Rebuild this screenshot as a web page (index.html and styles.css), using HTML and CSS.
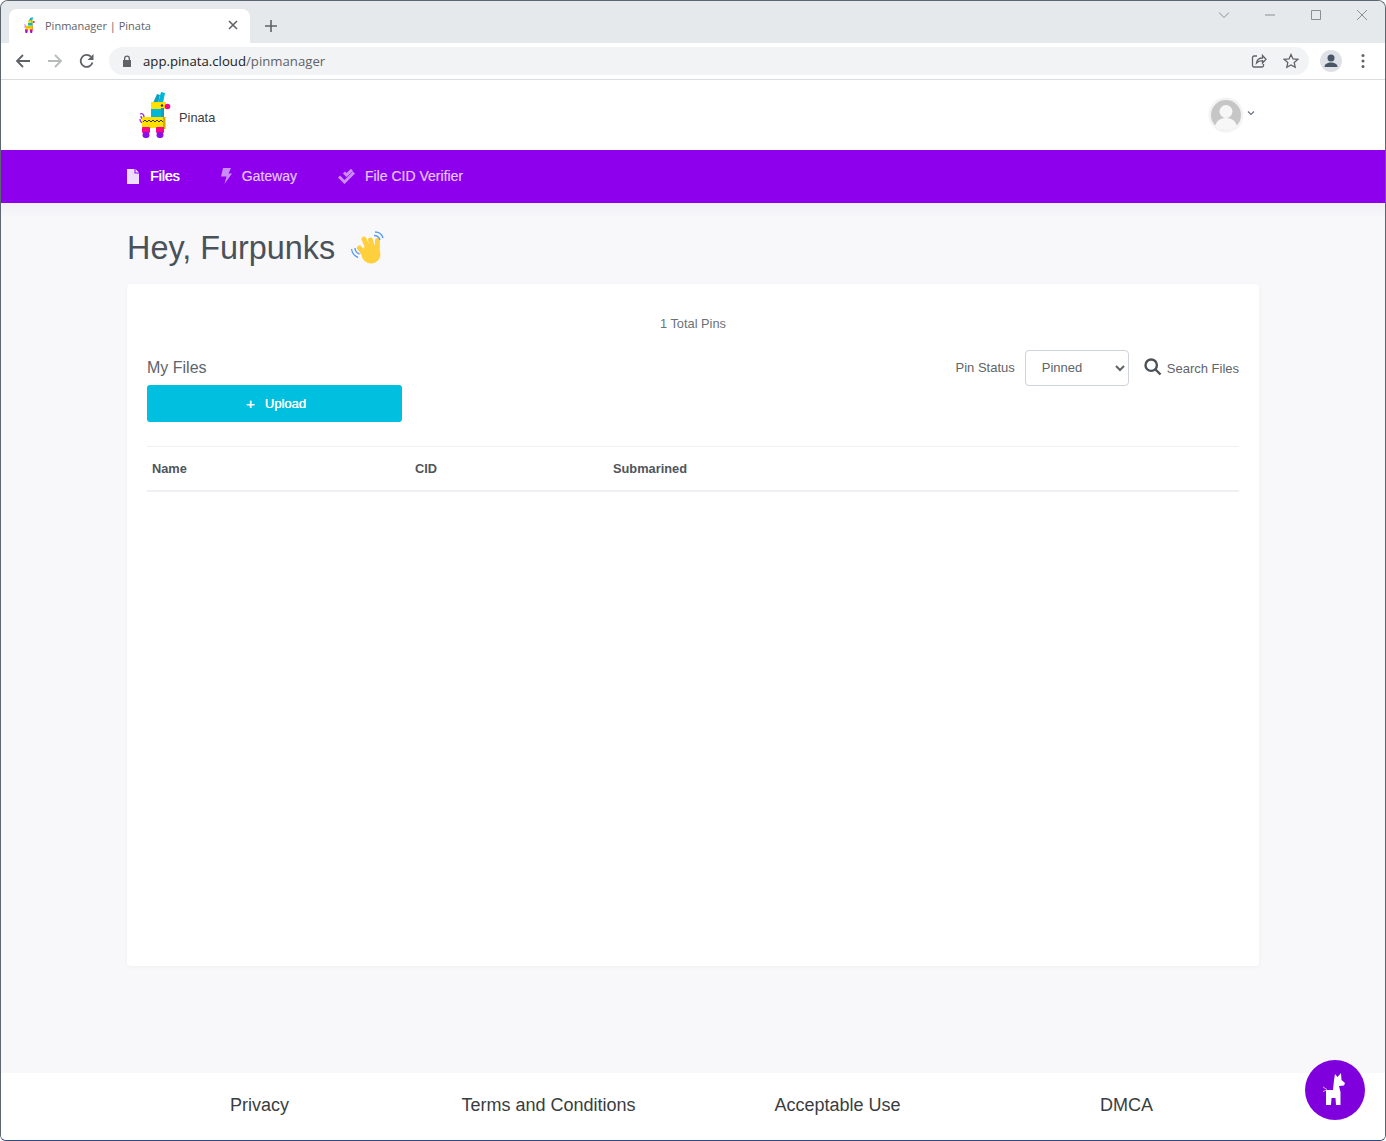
FILE: index.html
```html
<!DOCTYPE html>
<html lang="en">
<head>
  <meta charset="UTF-8" />
  <title>Pinmanager | Pinata</title>
  <link rel="stylesheet" href="styles.css">
</head>
<body>
  <svg class="defs" width="0" height="0">
    <symbol id="pinata" viewBox="0 0 32 46">
      <path d="M5 31c-3 0-4-2-4-4M5 27c-2 0-3-1-3-3M1 22c2-1 4 0 4 3v5" fill="none" stroke="#a01be8" stroke-width="1.300"/>
      <path d="M14 11l4-9 3 1-2 8z" fill="#0e9fbf"/>
      <path d="M19 11l3-11 4 1-2 10z" fill="#00b7d8"/>
      <rect x="12" y="10" width="15" height="7" fill="#ffe100"/>
      <circle cx="28.500" cy="14.500" r="2.800" fill="#f5078f"/>
      <circle cx="23" cy="13.500" r="1.200" fill="#333"/>
      <rect x="12" y="17" width="11" height="8" fill="#00b7d8"/>
      <rect x="22" y="16" width="3" height="10" fill="#0e9fbf"/>
      <rect x="3" y="25" width="22" height="11" fill="#ffe100"/>
      <rect x="24" y="25" width="2.500" height="12" fill="#cfa800"/>
      <path d="M4 30l2-2 2 2 2-2 2 2 2-2 2 2 2-2 2 2 2-2 2 2" fill="none" stroke="#222" stroke-width=".9"/>
      <rect x="3" y="35" width="8" height="6" rx="1" fill="#f5078f"/>
      <rect x="17" y="35" width="8" height="6" rx="1" fill="#f5078f"/>
      <rect x="3.500" y="40" width="7" height="6" rx="3" fill="#8a10e8"/>
      <rect x="17.500" y="40" width="7" height="6" rx="3" fill="#8a10e8"/>
    </symbol>
  </svg>

  <div class="window">
    <div class="tabstrip">
      <div class="tab">
        <svg class="tab-logo"><use href="#pinata"/></svg>
        <span class="tab-title">Pinmanager | Pinata</span>
        <svg class="tab-close" viewBox="0 0 10 10"><path d="M1 1l8 8M9 1l-8 8"/></svg>
      </div>
      <svg class="new-tab" viewBox="0 0 12 12"><path d="M6 0v12M0 6h12"/></svg>
      <div class="window-btns">
        <svg viewBox="0 0 12 12"><path d="M1 3.500l5 5 5-5"/></svg>
        <svg viewBox="0 0 12 12"><path d="M1 6h10"/></svg>
        <svg viewBox="0 0 12 12"><path d="M1.500 1.500h9v9h-9z"/></svg>
        <svg viewBox="0 0 12 12"><path d="M1 1l10 10M11 1L1 11"/></svg>
      </div>
    </div>

    <div class="toolbar">
      <svg class="tool" viewBox="0 0 16 16"><path d="M15 8H2M8 2L2 8l6 6"/></svg>
      <svg class="tool tool-off" viewBox="0 0 16 16"><path d="M1 8h13M8 2l6 6-6 6"/></svg>
      <svg class="tool" viewBox="0 0 16 16"><path d="M13.500 9.500A6 6 0 1 1 12 3.700"/><path class="fill" d="M14.500 1v6h-6z"/></svg>
      <div class="omnibox">
        <svg class="lock" viewBox="0 0 10 12"><path d="M2 5V3.500a3 3 0 0 1 6 0V5h1v7H1V5zm1.300 0h3.400V3.500a1.700 1.700 0 0 0-3.400 0z"/></svg>
        <span class="url"><span class="host">app.pinata.cloud</span>/pinmanager</span>
        <svg class="omni-icon" viewBox="0 0 16 16"><path d="M6 3H3a1.500 1.500 0 0 0-1.500 1.500v8A1.500 1.500 0 0 0 3 14h8a1.500 1.500 0 0 0 1.500-1.500V11"/><path d="M5.500 10c.5-3.500 3-5 6-5V2.500L15 6.300 11.500 10V7.700c-2.500 0-4.500.6-6 2.300z"/></svg>
        <svg class="omni-icon" viewBox="0 0 16 16"><path d="M8 1.500l2 4.400 4.800.5-3.600 3.200 1 4.700L8 11.900l-4.200 2.400 1-4.700L1.200 6.400 6 5.900z"/></svg>
      </div>
      <div class="profile-chip">
        <svg viewBox="0 0 22 22"><circle cx="11" cy="8" r="3.500"/><path d="M4.500 17c0-3 3-4.500 6.500-4.500s6.500 1.500 6.500 4.500z"/></svg>
      </div>
      <svg class="dots" viewBox="0 0 4 16"><circle cx="2" cy="2.500" r="1.500"/><circle cx="2" cy="8" r="1.500"/><circle cx="2" cy="13.500" r="1.500"/></svg>
    </div>

    <header class="topbar">
      <div class="brand">
        <svg class="brand-logo"><use href="#pinata"/></svg>
        <span class="brand-name">Pinata</span>
      </div>
      <div class="account">
        <svg class="avatar" viewBox="0 0 36 36">
          <circle cx="18" cy="18" r="17.500" fill="#f3f3f3"/>
          <circle cx="18" cy="18" r="15" fill="#c6c6c6"/>
          <circle cx="18" cy="14.500" r="6.500" fill="#f7f7f7"/>
          <path d="M7 29c2-6 6-8 11-8s9 2 11 8c-3 3-7 4-11 4s-8-1-11-4z" fill="#f7f7f7"/>
        </svg>
        <svg class="caret" viewBox="0 0 8 6"><path d="M1 1.500l3 3 3-3"/></svg>
      </div>
    </header>

    <nav class="nav">
      <a class="nav-item active" href="#">
        <svg viewBox="0 0 12 15"><path d="M0 0h7.500v4.500H12V15H0zM8.500 0L12 3.500H8.500z"/></svg>
        Files
      </a>
      <a class="nav-item" href="#">
        <svg class="bolt" viewBox="0 0 11 16"><path d="M2 0h8L7.500 5.500H11L3.500 16l2-7.500H0z"/></svg>
        Gateway
      </a>
      <a class="nav-item" href="#">
        <svg class="check" viewBox="0 0 17 15"><path d="M6 3.500l2.500 2.500L14 .8M1 7.500L6.500 13 16 3.500"/></svg>
        File CID Verifier
      </a>
    </nav>

    <main class="content">
      <h1 class="greeting">
        Hey, Furpunks
        <svg class="wave" viewBox="0 0 36 34">
          <g class="hand">
            <path d="M14 8l5 12M20.500 9L23 20M27.500 9.500L27 20M9.500 17l6 8"/>
          </g>
          <circle cx="21" cy="23" r="9.500" fill="#ffcf3d"/>
          <path d="M24 4.500c3 0 5 1.500 6 4.500M25 1c4 0 7 2.500 8 6M5 17c0 3 2 5 4.500 6M1.500 18c.5 4 3 7 6.500 8.500" fill="none" stroke="#5b9cf2" stroke-width="1.400"/>
        </svg>
      </h1>

      <section class="card">
        <p class="total">1 Total Pins</p>
        <div class="card-head">
          <div class="files-col">
            <h2 class="files-title">My Files</h2>
            <button class="upload"><span class="plus">+</span>Upload</button>
          </div>
          <div class="filters">
            <label class="pin-label" for="pin-status">Pin Status</label>
            <select class="pin-select" id="pin-status"><option>Pinned</option></select>
            <a class="search" href="#">
              <svg viewBox="0 0 18 18"><circle cx="7.200" cy="7.200" r="5.700"/><path d="M11.500 11.500l5 5"/></svg>
              Search Files
            </a>
          </div>
        </div>
        <div class="table-head">
          <span class="col-name">Name</span>
          <span class="col-cid">CID</span>
          <span>Submarined</span>
        </div>
      </section>
    </main>

    <footer class="footer">
      <a href="#">Privacy</a>
      <a href="#">Terms and Conditions</a>
      <a href="#">Acceptable Use</a>
      <a href="#">DMCA</a>
    </footer>

    <a class="help" href="#">
      <svg viewBox="0 0 24 34">
        <path d="M0 14l4 2.500M0 18.500l4-1.500" fill="none" stroke="#d9a8f5" stroke-width="1"/>
        <path d="M11 7l1-6 2.500 3L18 0l.5 7L22 10l-1 2.500-5 .5 1.500 6V32h-4.500l-.5-7H8.500L8 32H3V17h7z" fill="#fff"/>
      </svg>
    </a>
  </div>
</body>
</html>
```

FILE: styles.css
```css
* {
  box-sizing: border-box;
}

html, body {
  margin: 0;
  height: 100%;
}

body {
  font-family: "Liberation Sans", Arial, sans-serif;
  color: #4a4f55;
  overflow: hidden;
}

a {
  color: inherit;
  text-decoration: none;
}

.defs {
  display: block;
  position: absolute;
}

.window {
  position: relative;
  display: flex;
  flex-direction: column;
  height: 1141px;
  border: 1px solid #5c6670;
  border-bottom-color: #2a4a80;
  border-radius: 8px 8px 6px 6px;
  overflow: hidden;
  background: #f8f8fb;
}

/* browser chrome */
.tabstrip {
  display: flex;
  align-items: flex-end;
  flex: none;
  height: 42px;
  padding-left: 8px;
  background: #e6e9ec;
}

.tab {
  display: flex;
  align-items: center;
  width: 241px;
  height: 34px;
  padding: 0 12px 2px 15px;
  border-radius: 8px 8px 0 0;
  background: #fff;
}

.tab-logo {
  width: 11px;
  height: 16px;
  margin-right: 10px;
}

.tab-title {
  flex: 1;
  font: 11px "Open Sans", sans-serif;
  color: #5f6368;
}

.tab-close {
  width: 10px;
  height: 10px;
  fill: none;
  stroke: #5f6368;
  stroke-width: 1.600;
}

.new-tab {
  width: 12px;
  height: 12px;
  margin: 0 0 11px 15px;
  fill: none;
  stroke: #5f6368;
  stroke-width: 1.600;
}

.window-btns {
  display: flex;
  gap: 34px;
  margin: 0 17px 22px auto;
}

.window-btns svg {
  width: 12px;
  height: 12px;
  fill: none;
  stroke: #8a8f94;
  stroke-width: 1;
}

.toolbar {
  display: flex;
  align-items: center;
  flex: none;
  height: 37px;
  padding: 0 17px 0 14px;
  background: #fff;
  border-bottom: 1px solid #dadce0;
}

.tool {
  width: 16px;
  height: 16px;
  margin-right: 16px;
  fill: none;
  stroke: #5f6368;
  stroke-width: 1.800;
}

.tool .fill {
  fill: #5f6368;
  stroke: none;
}

.tool-off {
  stroke: #b8babc;
}

.omnibox {
  display: flex;
  align-items: center;
  flex: none;
  width: 1200px;
  height: 28px;
  margin-left: -2px;
  padding: 0 10px 0 13px;
  border-radius: 14px;
  background: #f1f3f4;
}

.lock {
  width: 10px;
  height: 12px;
  margin-right: 11px;
  fill: #5f6368;
}

.url {
  flex: 1;
  font: 13.200px "Open Sans", sans-serif;
  color: #5f6368;
}

.host {
  color: #202124;
}

.omni-icon {
  width: 16px;
  height: 16px;
  margin-left: 16px;
  fill: none;
  stroke: #5f6368;
  stroke-width: 1.300;
}

.profile-chip {
  display: flex;
  align-items: center;
  justify-content: center;
  width: 22px;
  height: 22px;
  margin-left: 11px;
  border-radius: 50%;
  background: #dee1e6;
}

.profile-chip svg {
  width: 22px;
  height: 22px;
  fill: #4a5568;
}

.dots {
  width: 4px;
  height: 16px;
  margin-left: 19px;
  fill: #5f6368;
}

/* app header */
.topbar {
  display: flex;
  align-items: center;
  justify-content: space-between;
  flex: none;
  height: 70px;
  padding: 0 130px 0 138px;
  background: #fff;
}

.brand {
  display: flex;
  align-items: center;
  gap: 8px;
  font-size: 12.800px;
  color: #3d3d3d;
}

.brand-logo {
  width: 32px;
  height: 46px;
}

.brand-name {
  padding-top: 4px;
}

.account {
  display: flex;
  align-items: center;
  gap: 3px;
}

.avatar {
  width: 36px;
  height: 36px;
}

.caret {
  width: 8px;
  height: 6px;
  margin-top: -4px;
  fill: none;
  stroke: #6b7280;
  stroke-width: 1.200;
}

.nav {
  display: flex;
  gap: 41px;
  flex: none;
  align-items: center;
  height: 53px;
  padding-left: 126px;
  background: #8e00ed;
}

.nav-item {
  display: flex;
  align-items: center;
  height: 18px;
  margin-top: -1px;
  font-size: 14px;
  color: rgba(255, 255, 255, .55);
  text-shadow: .4px 0 0 currentColor;
}

.nav-item svg {
  width: 12px;
  height: 15px;
  margin-right: 11px;
  fill: rgba(255, 255, 255, .55);
}

.nav-item svg.bolt {
  width: 11px;
  height: 16px;
  margin-right: 10px;
}

.nav-item svg.check {
  width: 17px;
  margin-right: 10px;
  fill: none;
  stroke: rgba(255, 255, 255, .55);
  stroke-width: 3;
}

.nav-item.active {
  color: #fff;
}

.nav-item.active svg {
  fill: #f0dcff;
}

/* page */
.content {
  flex: 1;
  padding: 24px 126px 0;
  background: linear-gradient(#f1f1f5, #f8f8fb 14px);
}

.greeting {
  display: flex;
  align-items: center;
  height: 42px;
  margin: 0 0 15px;
  font-size: 32.400px;
  font-weight: 400;
  color: #4a5259;
}

.wave {
  width: 36px;
  height: 34px;
  margin-left: 15px;
}

.hand path {
  fill: none;
  stroke: #ffcf3d;
  stroke-width: 5;
  stroke-linecap: round;
}

.card {
  height: 682px;
  padding: 32px 20px 0;
  border-radius: 4px;
  background: #fff;
  box-shadow: 0 1px 4px rgba(0, 0, 0, .04);
}

.total {
  margin: 0 0 19px;
  text-align: center;
  font-size: 12.800px;
  line-height: 15px;
  color: #6c7177;
}

.card-head {
  display: flex;
  justify-content: space-between;
  align-items: flex-start;
  height: 97px;
  border-bottom: 1px solid #eef0f3;
}

.files-title {
  margin: 8px 0 7px;
  font-size: 16px;
  font-weight: 400;
  line-height: 20px;
  color: #5e646a;
}

.upload {
  display: flex;
  align-items: center;
  justify-content: center;
  width: 255px;
  height: 37px;
  padding: 0 0 0 3px;
  border: 0;
  border-radius: 3px;
  background: #00bfdf;
  color: #fff;
  font: 13px "Liberation Sans", sans-serif;
  text-shadow: .3px 0 0 currentColor;
}

.plus {
  margin-right: 10px;
  font-size: 15px;
}

.filters {
  display: flex;
  align-items: center;
  font-size: 13px;
  color: #5e646a;
}

.pin-label {
  margin: -1px 10px 0 0;
}

.pin-select {
  width: 104px;
  height: 36px;
  margin-right: 15px;
  padding: 0 0 2px 12px;
  border: 1px solid #ced4da;
  border-radius: 4px;
  background: #fff;
  color: #5e646a;
  font: 13px "Liberation Sans", sans-serif;
}

.search {
  display: flex;
  align-items: center;
  gap: 5px;
}

.search svg {
  width: 18px;
  height: 18px;
  margin-top: -3px;
  fill: none;
  stroke: #4a5259;
  stroke-width: 2.400;
}

.table-head {
  display: flex;
  align-items: center;
  height: 45px;
  padding-left: 5px;
  border-bottom: 2px solid #eef0f3;
  font-size: 12.800px;
  font-weight: 700;
  color: #50555b;
}

.col-name {
  width: 263px;
}

.col-cid {
  width: 198px;
}

.footer {
  display: grid;
  grid-template-columns: repeat(4, 1fr);
  align-items: center;
  flex: none;
  height: 67px;
  padding: 0 114px 2px;
  background: #fff;
  text-align: center;
  font-size: 18px;
  color: #3a3d40;
}

.help {
  position: absolute;
  right: 20px;
  bottom: 20px;
  display: flex;
  align-items: center;
  justify-content: center;
  width: 60px;
  height: 60px;
  border-radius: 50%;
  background: #7f00dc;
}

.help svg {
  width: 24px;
  height: 34px;
}
```
